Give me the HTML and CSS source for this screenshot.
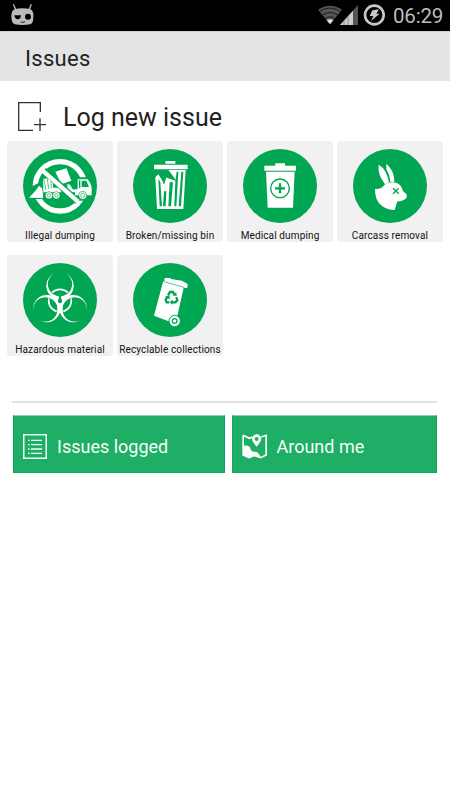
FILE: index.html
```html
<!DOCTYPE html>
<html lang="en">
<head>
<meta charset="utf-8">
<title>Issues</title>
<link rel="stylesheet" href="styles.css">
</head>
<body>
<div class="status">
  <svg class="robot" viewBox="0 0 69 66" width="23" height="22">
    <path d="M7 1L14 16M61 1L55 16" stroke="#bbb" stroke-width="4"/>
    <path d="M12 15Q34 10 57 15Q68 19 67 37Q68 57 58 61Q34 65 11 61Q1 57 1 37Q1 19 12 15Z" fill="#bbb"/>
    <path d="M10 34H30Q29 46 20 46Q11 45 10 34Z"/><circle cx="51" cy="38" r="9"/>
    <path d="M29 54Q36 57 42 53" fill="none" stroke="#222" stroke-width="3"/>
  </svg>
  <svg class="signals" viewBox="279 9 204 69" width="68" height="23">
    <path d="M279 29Q315 5 351 29L315 73Z" fill="#555"/>
    <path d="M283 35Q315 13 347 35M291 46Q315 29 339 46M300 56Q315 45 330 56" fill="none" stroke="#1c1c1c" stroke-width="3"/>
    <path d="M305 61Q315 55 325 61L315 73Z" fill="#ddd"/>
    <path d="M345 75L399 15V75Z" fill="#555"/><path d="M345 75L384 32V75Z" fill="#ccc"/>
    <path d="M357 62V75M369 49V75" stroke="#888" stroke-width="3"/>
    <circle cx="448" cy="45" r="28" fill="none" stroke="#c8c8c8" stroke-width="8"/>
    <path d="M442 31L462 28L454 41H464L438 63L445 48H434Z" fill="#c8c8c8"/>
  </svg>
  <span class="clock">06:29</span>
</div>
<header class="title"><span>Issues</span></header>
<main>
  <h1 class="log">
    <svg viewBox="51 303 90 93" width="30" height="31" fill="none" stroke="#333" stroke-width="4">
      <path d="M121 336V308H56V391H99M102 374H138M120 355V393"/>
    </svg>
    <span>Log new issue</span>
  </h1>
  <div class="grid">
    <div class="tile">
      <svg class="icon" viewBox="57 33 222 222">
        <circle class="disc" cx="168" cy="144" r="111"/>
        <circle cx="168" cy="145" r="74" fill="none" stroke="#fff" stroke-width="16"/>
        <path class="disc" d="M74 150L104 135L116 118H148L176 156V183H74ZM216 118H268V188H216Z"/>
        <path class="w" d="M154 101L187 91L202 128L172 139ZM117 122L148 121L147 149H168L172 163H118ZM190 138L198 140L206 154L218 156H224V163H190Z"/>
        <path d="M119 97L221 190" stroke="#00a651" stroke-width="19"/>
        <path d="M115 97L222 191" stroke="#fff" stroke-width="13"/>
        <path class="w" d="M75 179L91 162L98 154L105 143L114 151L117 165V180ZM221 124H251Q263 140 263 151V172H213V154H221Z"/>
        <path class="disc" d="M233 128H247L255 147H233ZM225 127H229V151H225Z"/>
        <path d="M119 122L126 156M130 123L134 153M141 130L142 151" stroke="#00a651" stroke-width="2"/>
        <g class="w" stroke="#00a651" stroke-width="2"><circle cx="135" cy="172" r="11"/><circle cx="157" cy="172" r="11"/><circle cx="236" cy="172" r="12"/></g>
        <g fill="none" stroke="#00a651" stroke-width="2"><circle cx="135" cy="172" r="5"/><circle cx="157" cy="172" r="5"/><circle cx="236" cy="172" r="6"/></g>
      </svg>
      <span class="label">Illegal dumping</span>
    </div>
    <div class="tile">
      <svg class="icon" viewBox="57 33 222 222">
        <circle class="disc" cx="168" cy="144" r="111"/>
        <path class="w" d="M154 69H184V77H154ZM120 80H221V94H120ZM162 96H215L208 213H129L124 118L133 109L146 128L150 138L156 119L186 127L172 108Z"/>
        <path d="M133 123L137 205H144L139 132ZM150 160L147 205H155L157 160ZM167 133L163 205H171L177 133ZM184 130L181 205H187L193 101H188ZM202 101L194 205H201L208 101Z" class="disc"/>
        <path class="disc" d="M135 106L150 139L157 118L185 128L163 96H140Z"/>
        <path class="w" d="M158 118L163 126L155 160L151 145Z"/>
      </svg>
      <span class="label">Broken/missing bin</span>
    </div>
    <div class="tile">
      <svg class="icon" viewBox="57 33 222 222">
        <circle class="disc" cx="168" cy="144" r="111"/>
        <path class="w" d="M154 83V76H183V83H216V98H121V83ZM126 101H212L207 209H131Z"/>
        <circle cx="168" cy="151" r="28" fill="none" stroke="#00a651" stroke-width="4"/>
        <path d="M168 136V166M153 151H183" stroke="#00a651" stroke-width="7"/>
      </svg>
      <span class="label">Medical dumping</span>
    </div>
    <div class="tile">
      <svg class="icon" viewBox="57 33 222 222">
        <circle class="disc" cx="168" cy="144" r="111"/>
        <path class="w" d="M134 80Q158 94 165 132L153 139Q130 109 134 80ZM157 77Q181 97 181 132L169 131Q167 109 157 93Z"/>
        <path class="w" d="M123 153Q142 155 150 142Q160 132 176 133Q198 134 204 151Q206 163 217 167Q221 178 213 184Q203 191 190 190L182 216Q161 216 144 204Q122 188 123 153Z"/>
        <path d="M177 151L194 167M194 151L177 167" stroke="#00a651" stroke-width="4"/>
      </svg>
      <span class="label">Carcass removal</span>
    </div>
    <div class="tile">
      <svg class="icon" viewBox="57 33 222 222">
        <circle class="disc" cx="168" cy="144" r="111"/>
        <circle cx="168" cy="146" r="34" fill="none" stroke="#fff" stroke-width="5"/>
        <g stroke="#00a651" stroke-width="4">
          <path id="horn" d="M151 64A41 41 0 1 0 185 64A36.500 36.500 0 1 1 151 64Z"/>
          <use href="#horn" transform="rotate(120 168 147)"/><use href="#horn" transform="rotate(240 168 147)"/>
        </g>
        <g class="w">
          <path id="blade" d="M151 64A41 41 0 1 0 185 64A36.500 36.500 0 1 1 151 64Z"/>
          <use href="#blade" transform="rotate(120 168 147)"/><use href="#blade" transform="rotate(240 168 147)"/>
        </g>
        <path class="w" d="M146 130L163 133L163 148L152 145ZM190 130L173 133L173 148L184 145ZM161 154H175L176 182H160Z"/>
        <circle class="disc" cx="168" cy="147" r="6"/>
        <path d="M168 147V120" stroke="#00a651" stroke-width="7"/>
      </svg>
      <span class="label">Hazardous material</span>
    </div>
    <div class="tile">
      <svg class="icon" viewBox="57 33 222 222">
        <circle class="disc" cx="168" cy="144" r="111"/>
        <path class="w" d="M152 78L170 78L171 81L204 86L221 96L220 108L209 107L190 192L180 195L170 210L120 191L147 89L151 87Z"/>
        <path d="M150 89L210 106" stroke="#00a651" stroke-width="2"/>
        <circle class="w" cx="182" cy="207" r="17" stroke="#00a651" stroke-width="3"/>
        <circle cx="182" cy="207" r="7" fill="none" stroke="#00a651" stroke-width="4"/>
        <g fill="none" stroke="#00a651" stroke-width="7">
          <path d="M162 130L168 120H177L182 129M187 135L190 145L184 151H174M166 151H158L155 143L161 134"/>
        </g>
        <path class="disc" d="M175 130L188 132L187 121ZM176 143V158L167 151ZM153 134L166 130L168 142Z"/>
      </svg>
      <span class="label">Recyclable collections</span>
    </div>
  </div>
  <hr>
  <div class="actions">
    <div class="btn">
      <svg viewBox="69 117 72 75" width="24" height="25" fill="none" stroke="#f0fff5" stroke-width="3">
        <path d="M71 119H139V190H71Z" stroke-width="5"/>
        <path d="M93 136H126M93 149H126M93 162H126M93 175H126M84 136H89M84 149H89M84 162H89M84 175H89" stroke-width="4"/>
      </svg>
      <span>Issues logged</span>
    </div>
    <div class="btn">
      <svg viewBox="48 115 75 76" width="25" height="25">
        <path d="M51 119L70 128L79 124M106 124L121 119V179L104 187L84 180L69 187L51 179V119" fill="none" stroke="#fff" stroke-width="5"/>
        <path class="w" d="M51 151Q66 147 72 155Q74 168 84 169Q99 168 104 187L84 180L69 189L51 179Z"/>
        <path class="w" fill-rule="evenodd" d="M92 154Q78 137 78 130A14 14 0 0 1 106 130Q106 137 92 154ZM92 124A6 6 0 1 0 92 136A6 6 0 1 0 92 124Z"/>
      </svg>
      <span>Around me</span>
    </div>
  </div>
</main>
</body>
</html>
```
FILE: styles.css
```css
* { box-sizing: border-box; }
body { margin: 0; background: #fff; font-family: Roboto, sans-serif; color: #222; }
svg { display: block; flex: none; }
.status { height: 31px; background: #000; display: flex; align-items: flex-start; padding: 3px 7px 0 11px; }
.robot { margin-top: 1px; }
.signals { margin-left: auto; }
.clock { width: 50px; margin-left: 7px; font-size: 20.5px; line-height: 27px; color: #bdbdbd; white-space: nowrap; letter-spacing: -.2px; }
.title { height: 50px; background: #e4e4e4; border-top: 1px solid #d2d2d2; padding-left: 25px; font-size: 22px; line-height: 54px; letter-spacing: .3px; }
.log { margin: 0; height: 60px; padding: 20px 0 0 17px; display: flex; gap: 16px; font-weight: 400; font-size: 25px; line-height: 33px; }
.grid { display: grid; grid-template-columns: repeat(4, 106px); gap: 13px 4px; padding-left: 7px; }
.tile { height: 101px; background: #f1f1f1; border-radius: 3px; padding-top: 8px; display: flex; flex-direction: column; align-items: center; }
.icon { width: 74px; height: 74px; }
.disc { fill: #00a651; }
.w { fill: #fff; }
.label { margin-top: 5px; font-size: 10px; line-height: 15px; white-space: nowrap; color: #111; letter-spacing: .13px; }
hr { margin: 45px 13px 0 12px; border: 0; height: 2px; background: #e2e2e2; }
.actions { display: grid; grid-template-columns: 212.500px 205px; gap: 7px; margin: 12px 0 0 12.500px; }
.btn { height: 58px; background: #1fae66; border: 1px solid #14a45a; border-top-color: #8fd0ab; display: flex; align-items: center; gap: 10px; padding: 5px 0 0 9.500px; color: #f4fff8; font-size: 18px; }
.btn + .btn { padding-left: 8.500px; }
```
